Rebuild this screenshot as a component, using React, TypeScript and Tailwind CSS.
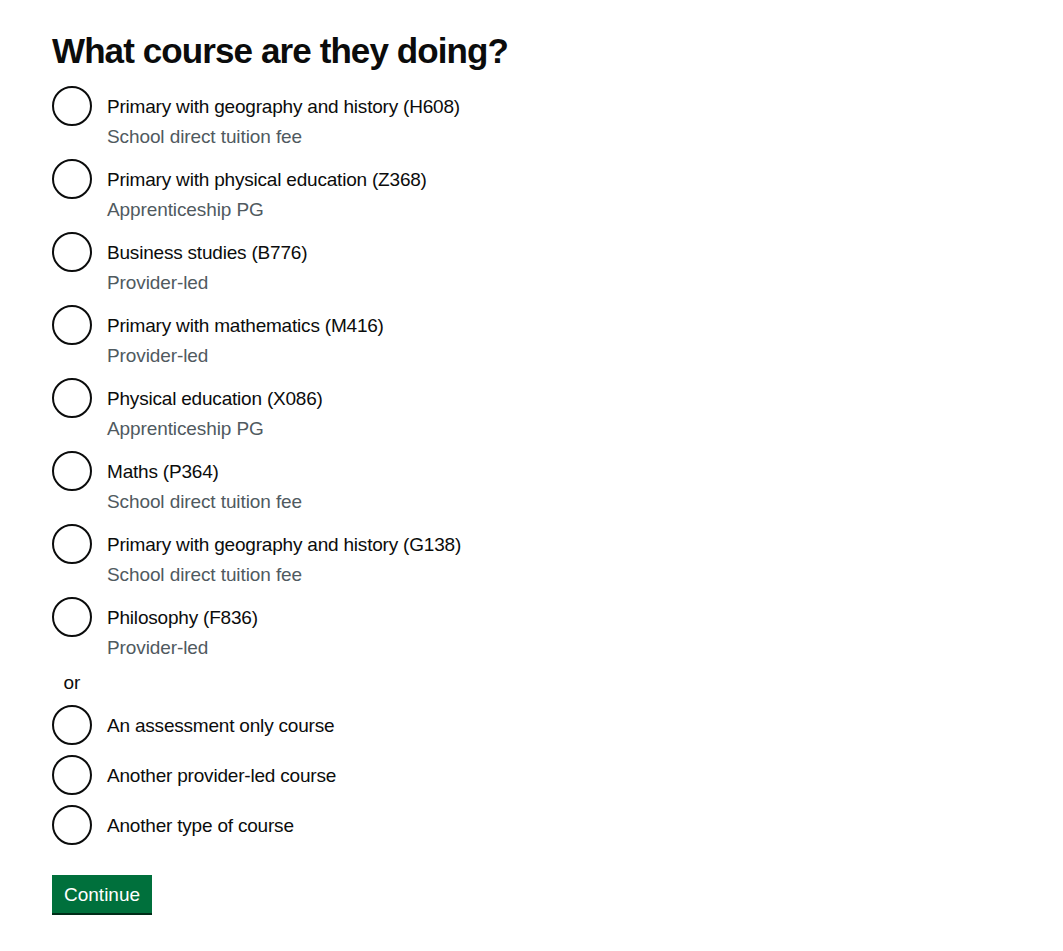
import React from "react";

const courses = [
  ["Primary with geography and history (H608)", "School direct tuition fee"],
  ["Primary with physical education (Z368)", "Apprenticeship PG"],
  ["Business studies (B776)", "Provider-led"],
  ["Primary with mathematics (M416)", "Provider-led"],
  ["Physical education (X086)", "Apprenticeship PG"],
  ["Maths (P364)", "School direct tuition fee"],
  ["Primary with geography and history (G138)", "School direct tuition fee"],
  ["Philosophy (F836)", "Provider-led"],
];

const others = ["An assessment only course", "Another provider-led course", "Another type of course"];

function Radio({ label, hint }: { label: string; hint?: string }) {
  return (
    <div className="flex mb-[10px]">
      <div className="w-[40px] h-[40px] rounded-full border-2 border-[#0b0c0c] shrink-0 bg-white" />
      <div className="pl-[15px]">
        <div className="pt-[8px] pb-[5px] text-[19px] leading-[25px] text-[#0b0c0c] tracking-[-0.2px]">{label}</div>
        {hint && <div className="text-[19px] leading-[25px] text-[#505a5f] tracking-[-0.1px]">{hint}</div>}
      </div>
    </div>
  );
}

export default function App() {
  return (
    <div
      className="bg-white min-h-[951px] pl-[52px] pt-[31px]"
      style={{ fontFamily: '"Liberation Sans", Arial, sans-serif' }}
    >
      <h1 className="text-[35px] leading-[40px] font-bold text-[#0b0c0c] mb-[15px] tracking-[-0.9px]">
        What course are they doing?
      </h1>
      <div>
        {courses.map(([l, h]) => (
          <Radio key={l} label={l} hint={h} />
        ))}
        <div className="w-[40px] text-center text-[19px] leading-[25px] text-[#0b0c0c] mb-[10px]">or</div>
        {others.map((l) => (
          <Radio key={l} label={l} />
        ))}
      </div>
      <button className="mt-[20px] bg-[#00703c] text-white text-[19px] leading-[19px] pt-[8px] pb-[7px] px-[10px] border-2 border-transparent shadow-[0_2px_0_#002d18]">
        Continue
      </button>
    </div>
  );
}
